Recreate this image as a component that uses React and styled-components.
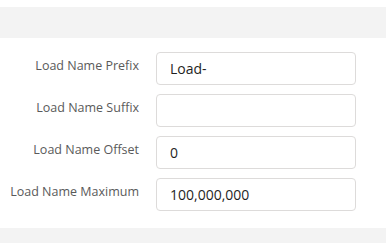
import styled, { createGlobalStyle } from "styled-components";

const GlobalStyle = createGlobalStyle`
    body {
        margin: 0;
        background: #ffffff;
        font-family: 'Open Sans', 'Liberation Sans', sans-serif;
    }
`;

const fields = [
    { label: "Load Name Prefix", value: "Load-" },
    { label: "Load Name Suffix", value: "" },
    { label: "Load Name Offset", value: "0" },
    { label: "Load Name Maximum", value: "100,000,000" },
];

export default function App() {
    return (
        <Page>
            <GlobalStyle />
            <Band />
            <Form>
                {fields.map((f) => (
                    <Row key={f.label}>
                        <Label>{f.label}</Label>
                        <Input type="text" defaultValue={f.value} />
                    </Row>
                ))}
            </Form>
            <FooterBand />
        </Page>
    );
}

const Page = styled.div`
    width: 386px;
    height: 243px;
    display: flex;
    flex-direction: column;
    padding-top: 7px;
    box-sizing: border-box;
    overflow: hidden;
`;

const Band = styled.div`
    height: 31px;
    background: #f3f3f3;
`;

const Form = styled.div`
    display: flex;
    flex-direction: column;
    gap: 9px;
    padding: 14px 0 17px;
`;

const Row = styled.div`
    display: flex;
    align-items: flex-start;
`;

const Label = styled.label`
    width: 156px;
    box-sizing: border-box;
    padding: 5px 17px 0 0;
    text-align: right;
    font-size: 12.5px;
    line-height: 18px;
    color: #5a5a5a;
    white-space: nowrap;
`;

const Input = styled.input`
    width: 200px;
    height: 33px;
    box-sizing: border-box;
    border: 1px solid #dddbda;
    border-radius: 4px;
    padding: 0 12px 0 13px;
    font-family: 'Open Sans', 'Liberation Sans', sans-serif;
    font-size: 14px;
    color: #1f1f1f;
    background: #ffffff;
    outline: none;
`;

const FooterBand = styled.div`
    flex: 1;
    background: #f3f3f3;
`;
